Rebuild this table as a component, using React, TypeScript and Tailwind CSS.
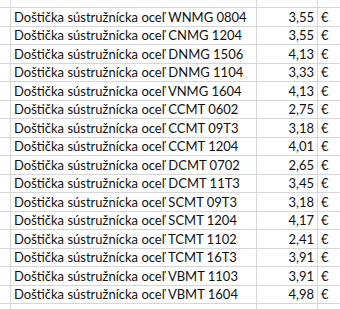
import React from "react";

const rows: [string, string][] = [
  ["WNMG 0804", "3,55"],
  ["CNMG 1204", "3,55"],
  ["DNMG 1506", "4,13"],
  ["DNMG 1104", "3,33"],
  ["VNMG 1604", "4,13"],
  ["CCMT 0602", "2,75"],
  ["CCMT 09T3", "3,18"],
  ["CCMT 1204", "4,01"],
  ["DCMT 0702", "2,65"],
  ["DCMT 11T3", "3,45"],
  ["SCMT 09T3", "3,18"],
  ["SCMT 1204", "4,17"],
  ["TCMT 1102", "2,41"],
  ["TCMT 16T3", "3,91"],
  ["VBMT 1103", "3,91"],
  ["VBMT 1604", "4,98"],
];

function Row({ a, b, c, h }: { a: string; b: string; c: string; h: string }) {
  return (
    <div className={`flex ${h} border-b border-[#d6d6d6]`}>
      <div className="w-[11px] shrink-0 border-r border-[#d6d6d6]" />
      <div className="w-[246px] shrink-0 border-r border-[#d6d6d6] pl-[3px] flex items-center whitespace-nowrap overflow-hidden">
        {a}
      </div>
      <div className="w-[61px] shrink-0 border-r border-[#d6d6d6] pr-[3px] flex items-center justify-end">
        {b}
      </div>
      <div className="flex-1 pl-[3px] flex items-center">{c}</div>
    </div>
  );
}

export default function App() {
  return (
    <div
      className="w-[340px] h-[309px] bg-white overflow-hidden text-[13px] text-[#111111] leading-none"
      style={{ fontFamily: "Lato, 'Open Sans', sans-serif" }}
    >
      <Row a="" b="" c="" h="h-[8px]" />
      {rows.map(([code, price], i) => (
        <Row
          key={i}
          a={`Doštička sústružnícka oceľ ${code}`}
          b={price}
          c="€"
          h={i % 2 === 0 ? "h-[19px]" : "h-[18px]"}
        />
      ))}
      <Row a="" b="" c="" h="h-[19px]" />
    </div>
  );
}
